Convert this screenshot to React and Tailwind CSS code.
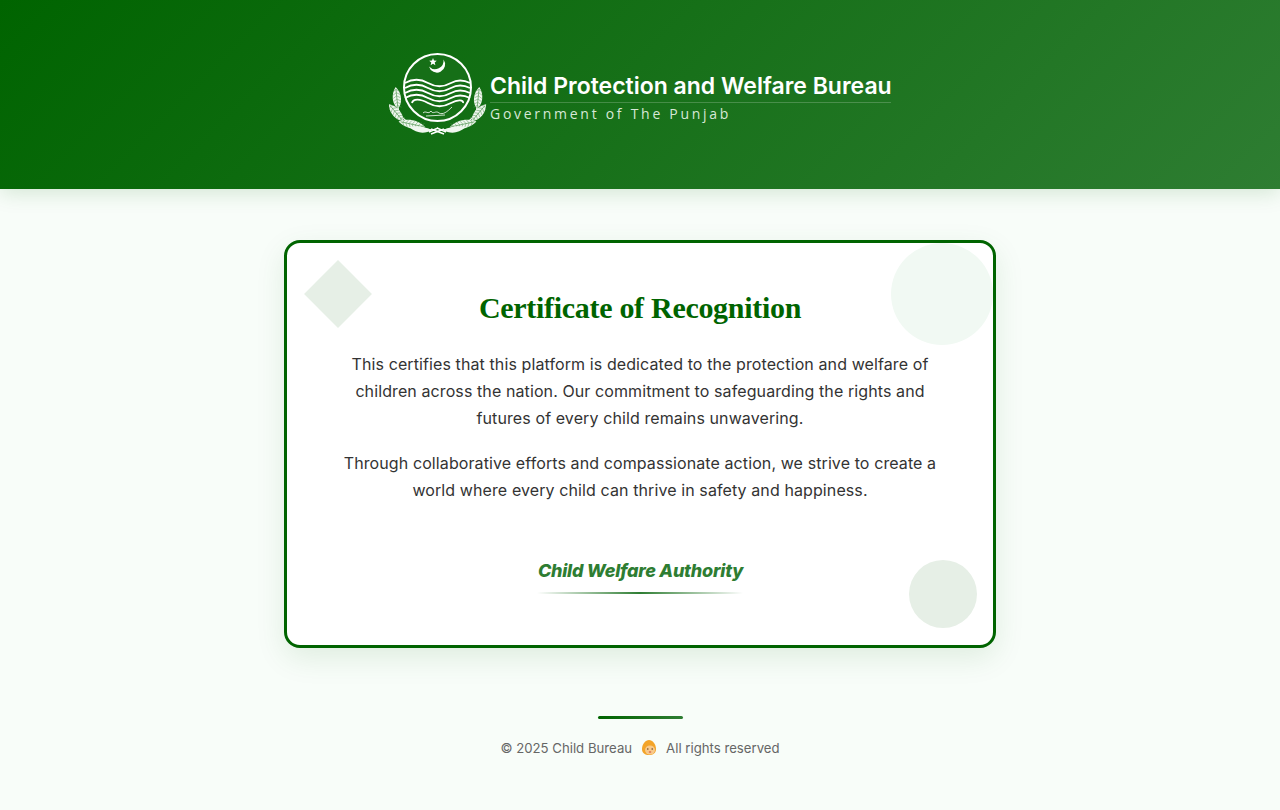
import React from "react";

function Ear({ x, y, angle, len = 20 }) {
  // wheat ear, drawn pointing up from its base and then rotated
  const rows = [];
  for (let i = 3; i < len - 2; i += 3.2) rows.push(i);
  return (
    <g transform={`translate(${x} ${y}) rotate(${angle})`}>
      <path
        d={`M0 0 C-5.5 ${-len * 0.25} -5.5 ${-len * 0.7} 0 ${-len} C5.5 ${-len * 0.7} 5.5 ${-len * 0.25} 0 0Z`}
        fill="#f1f7f0"
      />
      <path d={`M0 -1 L0 ${-len + 2}`} stroke="#3f8a3f" strokeWidth="0.6" />
      {rows.map((r) => (
        <path key={r} d={`M-3.6 ${-r + 1.6} L0 ${-r - 0.6} L3.6 ${-r + 1.6}`} stroke="#5a9a5a" strokeWidth="0.5" fill="none" />
      ))}
    </g>
  );
}

function Wreath({ flip }) {
  return (
    <g transform={flip ? "translate(97 0) scale(-1 1)" : undefined}>
      <path d="M9 57 C10 66 20 76 42 79" stroke="#fff" strokeWidth="1.3" fill="none" />
      <Ear x={9} y={58} angle={-6} len={22} />
      <Ear x={14} y={70} angle={-40} len={22} />
      <Ear x={36} y={76} angle={-78} len={27} />
      <path d="M20 76 C28 83 36 83 43 79 C36 76 28 74 20 76Z" fill="#f1f7f0" />
      <path d="M42 78 L55 83 M40 81 L49 77" stroke="#fff" strokeWidth="1.6" fill="none" />
    </g>
  );
}

function Emblem() {
  const waves = [32, 37, 42, 47, 52];
  return (
    <svg width="98" height="84" viewBox="0 0 98 84" fill="none">
      <Wreath />
      <Wreath flip />
      <circle cx="48.5" cy="36.5" r="33.5" fill="#166f17" stroke="#fff" strokeWidth="2" />
      <path d="M40 15.5 A8.2 8.2 0 1 0 54.5 8.5 A8.5 8.5 0 0 1 40 15.5Z" fill="#fff" />
      <path d="M44 7 L45 9.6 L47.8 9.8 L45.7 11.5 L46.4 14.2 L44 12.7 L41.6 14.2 L42.3 11.5 L40.2 9.8 L43 9.6 Z" fill="#fff" />
      {waves.map((y, i) => (
        <path
          key={y}
          d={`M${i === 4 ? 23 : 16} ${y} C24 ${y - 4.5} 31 ${y - 4.5} 39 ${y} C47 ${y + 4.5} 54 ${y + 4.5} 62 ${y} C69 ${y - 4} 75 ${y - 3} ${i === 4 ? 74 : 81} ${y}`}
          stroke="#fff"
          strokeWidth="1.9"
        />
      ))}
      <path d="M34 62 C37 59 39 64 42 60 C44 64 47 59 50 62 C54 64 58 61 63 56 M37 65 L56 64" stroke="#fff" strokeWidth="0.8" />
    </svg>
  );
}

function BabyFace() {
  return (
    <svg width="16" height="17" viewBox="0 0 16 17" className="mx-[9px] -mt-[3px]">
      <path d="M8 1 C11.5 1 15 5 15 10 C15 14 12 16 8 16 C4 16 1 14 1 10 C1 5 4.5 1 8 1Z" fill="#f3a429" />
      <ellipse cx="9" cy="11" rx="5" ry="4.6" fill="#f8c98a" />
      <circle cx="6.8" cy="10" r="0.8" fill="#6b4423" />
      <circle cx="11.2" cy="10" r="0.8" fill="#6b4423" />
      <ellipse cx="9" cy="13" rx="1.3" ry="0.8" fill="#d9604c" />
    </svg>
  );
}

export default function App() {
  return (
    <div className="min-h-[810px] bg-[#f8fdf9] font-['Inter',sans-serif]">
      <header className="h-[189px] bg-[linear-gradient(135deg,#006400,#2e7d32)] shadow-[0_4px_20px_rgba(0,100,0,0.15)] flex justify-center pt-[51px]">
        <div className="flex items-start gap-[3px] h-[84px]">
          <Emblem />
          <div className="pt-[21px] w-[401px]">
            <div className="text-[23px] leading-[28px] font-semibold text-white whitespace-nowrap">
              Child Protection and Welfare Bureau
            </div>
            <div className="border-t border-white/20 mt-[2px] pt-[1px] font-['Open_Sans',sans-serif] text-[14px] leading-[19px] tracking-[2.72px] text-[#d7e8d7] whitespace-nowrap">
              Government of The Punjab
            </div>
          </div>
        </div>
      </header>

      <main className="flex flex-col items-center pt-[51px]">
        <section className="relative w-[712px] h-[408px] bg-white border-[3px] border-[#006400] rounded-[16px] shadow-[0_10px_30px_rgba(0,100,0,0.1)] overflow-hidden text-center">
          <div className="absolute left-[27px] top-[27px] w-[48px] h-[48px] rotate-45 bg-[#e6efe6]" />
          <div className="absolute right-0 top-0 w-[102px] h-[102px] rounded-full bg-[#f1f9f3]" />
          <div className="absolute right-[16px] bottom-[17px] w-[68px] h-[68px] rounded-full bg-[#e6efe6]" />

          <div className="relative pt-[46px]">
            <h1 className="font-['Liberation_Serif',serif] text-[30px] leading-[38px] font-bold tracking-[-0.3px] text-[#006400]">
              Certificate of Recognition
            </h1>
            <div className="mt-[24px] text-[16px] leading-[27.2px] text-[#333] tracking-[0.1px]">
              <p>
                This certifies that this platform is dedicated to the protection and welfare of
                <br />
                children across the nation. Our commitment to safeguarding the rights and
                <br />
                futures of every child remains unwavering.
              </p>
              <p className="mt-[17px]">
                Through collaborative efforts and compassionate action, we strive to create a
                <br />
                world where every child can thrive in safety and happiness.
              </p>
            </div>
            <div className="mt-[53px] pl-[1px] text-[18px] leading-[27px] font-extrabold italic tracking-[-0.25px] text-[#2e7d32]">
              Child Welfare Authority
            </div>
            <div className="mx-auto mt-[8px] w-[206px] h-[2px] bg-[linear-gradient(90deg,transparent,#2e7d32,transparent)]" />
          </div>
        </section>

        <footer className="mt-[68px] flex flex-col items-center">
          <div className="w-[85px] h-[3px] rounded-[2px] bg-[linear-gradient(90deg,#006400,#2e7d32)]" />
          <div className="mt-[18px] flex items-center text-[13.2px] leading-[23px] text-[#666]">
            <span>© 2025 Child Bureau</span>
            <BabyFace />
            <span>All rights reserved</span>
          </div>
        </footer>
      </main>
    </div>
  );
}
